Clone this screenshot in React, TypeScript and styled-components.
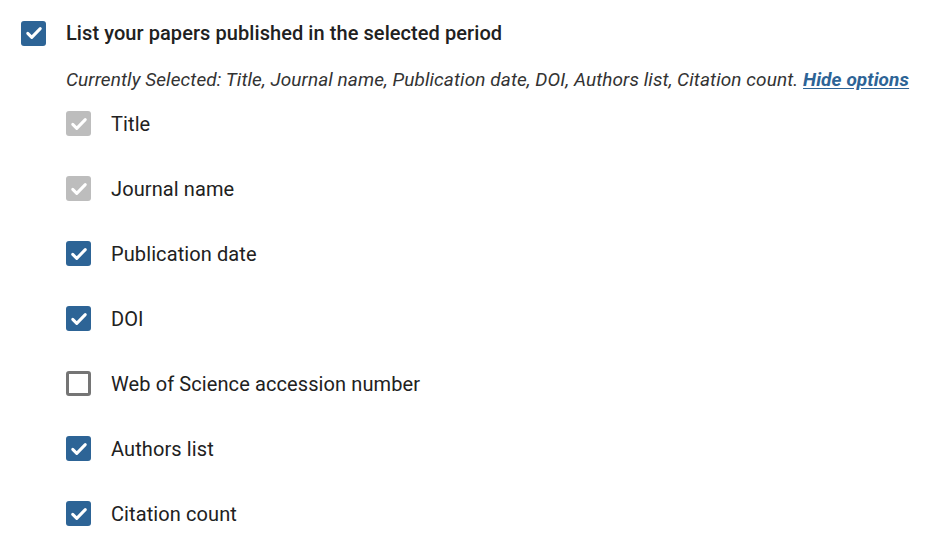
import React from "react";
import styled, { createGlobalStyle } from "styled-components";

const Global = createGlobalStyle`
  html, body { margin: 0; padding: 0; background: #ffffff; }
  body { font-family: Roboto, "Liberation Sans", Arial, sans-serif; color: #212121; }
`;

const Panel = styled.div`
  padding: 20px 21px 0 21px;
  display: flex;
  flex-direction: column;
`;

const HeaderRow = styled.label`
  display: flex;
  align-items: center;
  gap: 20px;
  height: 26px;
`;

const HeaderText = styled.span`
  font-size: 20px;
  font-weight: 500;
  color: #212121;
  letter-spacing: 0.07px;
`;

const Description = styled.div`
  margin-top: 22px;
  padding-left: 45px;
  font-size: 19px;
  line-height: 24px;
  font-style: italic;
  color: #333333;
  white-space: nowrap;
  letter-spacing: 0.09px;
`;

const HideLink = styled.a`
  font-weight: 700;
  color: #2d6496;
  text-decoration: underline;
  text-underline-offset: 2px;
  cursor: pointer;
`;

const OptionList = styled.div`
  display: flex;
  flex-direction: column;
  padding-left: 45px;
  margin-top: -1px;
`;

const OptionRow = styled.label`
  display: flex;
  align-items: center;
  gap: 20px;
  height: 65px;
`;

const OptionText = styled.span`
  font-size: 20px;
  color: #212121;
  padding-top: 1px;
  letter-spacing: 0.1px;
`;

type State = "checked" | "disabled" | "unchecked";

const Box = styled.span<{ $state: State }>`
  box-sizing: border-box;
  width: 25px;
  height: 25px;
  flex: 0 0 25px;
  border-radius: 3px;
  display: flex;
  align-items: center;
  justify-content: center;
  background: ${(p) =>
    p.$state === "checked" ? "#2d6496" : p.$state === "disabled" ? "#bdbdbd" : "#ffffff"};
  border: ${(p) => (p.$state === "unchecked" ? "3px solid #757575" : "none")};
`;

const Check = () => (
  <svg width="20" height="20" viewBox="0 0 24 24" fill="none">
    <path
      d="M4.5 12.5l4.8 4.8L19.5 6.8"
      stroke="#ffffff"
      strokeWidth="3.6"
      strokeLinecap="round"
      strokeLinejoin="round"
    />
  </svg>
);

const CheckBox = ({ state }: { state: State }) => (
  <Box $state={state}>{state !== "unchecked" && <Check />}</Box>
);

const options: { label: string; state: State }[] = [
  { label: "Title", state: "disabled" },
  { label: "Journal name", state: "disabled" },
  { label: "Publication date", state: "checked" },
  { label: "DOI", state: "checked" },
  { label: "Web of Science accession number", state: "unchecked" },
  { label: "Authors list", state: "checked" },
  { label: "Citation count", state: "checked" },
];

export default function App() {
  return (
    <>
      <Global />
      <Panel>
        <HeaderRow>
          <CheckBox state="checked" />
          <HeaderText>List your papers published in the selected period</HeaderText>
        </HeaderRow>
        <Description>
          Currently Selected: Title, Journal name, Publication date, DOI, Authors list, Citation
          count. <HideLink>Hide options</HideLink>
        </Description>
        <OptionList>
          {options.map((o) => (
            <OptionRow key={o.label}>
              <CheckBox state={o.state} />
              <OptionText>{o.label}</OptionText>
            </OptionRow>
          ))}
        </OptionList>
      </Panel>
    </>
  );
}
